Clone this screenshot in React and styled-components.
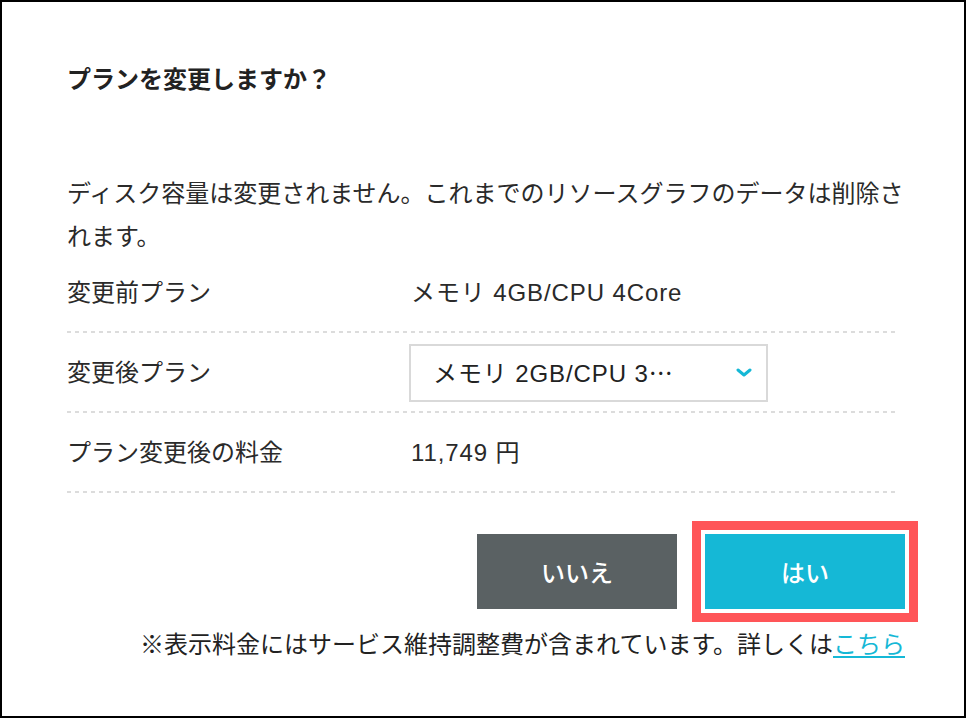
import React from "react";
import styled, { createGlobalStyle } from "styled-components";

const GlobalStyle = createGlobalStyle`
  html, body {
    margin: 0;
    padding: 0;
    background: #fff;
  }
  body {
    font-family: "Liberation Sans", "Noto Sans CJK JP", sans-serif;
    color: #2a2a2a;
  }
`;

const Frame = styled.div`
  box-sizing: border-box;
  width: 966px;
  height: 718px;
  border: 2px solid #000;
  padding: 62px 0 0 65px;
  background: #fff;
`;

const Content = styled.div`
  width: 840px;
`;

const Title = styled.h2`
  margin: 0;
  font-size: 24px;
  line-height: 32px;
  font-weight: 700;
  color: #222;
`;

const Message = styled.p`
  margin: 76px 0 -5px;
  font-size: 24px;
  line-height: 43px;
`;

const Table = styled.div`
  width: 830px;
`;

const Row = styled.div`
  display: grid;
  grid-template-columns: 344px 1fr;
  align-items: center;
  height: 80px;
  box-sizing: border-box;
  padding-top: 2px;
  padding-bottom: 2px;
  font-size: 24px;
  line-height: 28px;
  background-image: repeating-linear-gradient(
    to right,
    #dcdcdc 0,
    #dcdcdc 4px,
    transparent 4px,
    transparent 8px
  );
  background-size: 100% 2px;
  background-position: left bottom;
  background-repeat: no-repeat;
`;

const Label = styled.div``;

const Value = styled.div`
  letter-spacing: 0.9px;
`;

const Select = styled.div`
  box-sizing: border-box;
  width: 359px;
  height: 58px;
  margin-left: -2px;
  border: 2px solid #d9d9d9;
  display: flex;
  align-items: center;
  justify-content: space-between;
  padding: 0 14px 0 22px;
  font-size: 24px;
  color: #222;
`;

const Ellipsis = styled.span`
  font-family: "Noto Sans CJK JP", sans-serif;
  font-feature-settings: "fwid" 1;
  letter-spacing: 0;
`;

const Actions = styled.div`
  display: flex;
  justify-content: flex-end;
  gap: 28px;
  margin-top: 41px;
  padding-right: 2px;
`;

const Button = styled.button`
  width: 200px;
  height: 75px;
  border: none;
  padding: 0;
  font-family: "Liberation Sans", "Noto Sans CJK JP", sans-serif;
  font-size: 24px;
  font-weight: 500;
  color: #fff;
  background: ${(p) => (p.$primary ? "#15b8d6" : "#5a6163")};
  box-shadow: ${(p) =>
    p.$highlight ? "0 0 0 4px #fff, 0 0 0 13px #ff5558" : "none"};
  cursor: pointer;
`;

const Note = styled.p`
  margin: 24px 0 0;
  padding-right: 2px;
  text-align: right;
  font-size: 24px;
  line-height: 24px;
  color: #222;

  a {
    color: #15b8d6;
    text-decoration: underline;
    text-underline-offset: 3px;
  }
`;

function Chevron() {
  return (
    <svg width="16" height="12" viewBox="0 0 16 12">
      <polyline
        points="2,3 8,8 14,3"
        fill="none"
        stroke="#15b8d6"
        strokeWidth="3"
        strokeLinecap="round"
        strokeLinejoin="round"
      />
    </svg>
  );
}

export default function App() {
  return (
    <>
      <GlobalStyle />
      <Frame lang="ja">
        <Content>
          <Title>プランを変更しますか？</Title>
          <Message>
            ディスク容量は変更されません。これまでのリソースグラフのデータは削除されます。
          </Message>
          <Table>
            <Row>
              <Label>変更前プラン</Label>
              <Value>メモリ 4GB/CPU 4Core</Value>
            </Row>
            <Row>
              <Label>変更後プラン</Label>
              <Value>
                <Select>
                  <span>
                    メモリ 2GB/CPU 3<Ellipsis>…</Ellipsis>
                  </span>
                  <Chevron />
                </Select>
              </Value>
            </Row>
            <Row>
              <Label>プラン変更後の料金</Label>
              <Value>11,749 円</Value>
            </Row>
          </Table>
          <Actions>
            <Button>いいえ</Button>
            <Button $primary $highlight>
              はい
            </Button>
          </Actions>
          <Note>
            ※表示料金にはサービス維持調整費が含まれています。詳しくは
            <a href="#">こちら</a>
          </Note>
        </Content>
      </Frame>
    </>
  );
}
